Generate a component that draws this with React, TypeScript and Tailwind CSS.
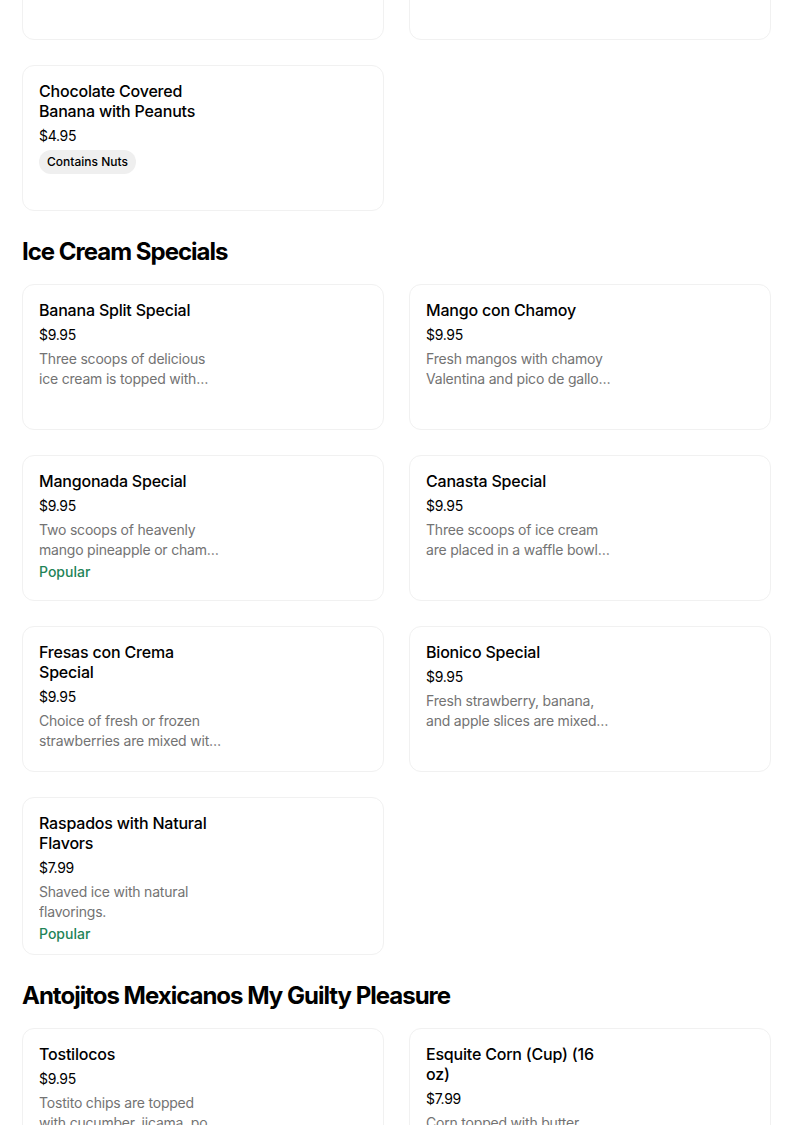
import React from "react";

interface MenuItem {
  name: string;
  price: string;
  description?: string;
  popular?: boolean;
  tag?: string;
}

interface Section {
  title?: string;
  items: (MenuItem | null)[];
}

const font = { fontFamily: "Inter, 'Liberation Sans', sans-serif" };

// the page is scrolled: the first row of cards sits mostly above the window
const sections: Section[] = [
  {
    items: [
      null,
      null,
      {
        name: "Chocolate Covered Banana with Peanuts",
        price: "$4.95",
        tag: "Contains Nuts",
      },
    ],
  },
  {
    title: "Ice Cream Specials",
    items: [
      {
        name: "Banana Split Special",
        price: "$9.95",
        description:
          "Three scoops of delicious ice cream is topped with bananas, whipped cream and a cherry.",
      },
      {
        name: "Mango con Chamoy",
        price: "$9.95",
        description:
          "Fresh mangos with chamoy Valentina and pico de gallo seasoning.",
      },
      {
        name: "Mangonada Special",
        price: "$9.95",
        description:
          "Two scoops of heavenly mango pineapple or chamoy sorbet with fresh mango.",
        popular: true,
      },
      {
        name: "Canasta Special",
        price: "$9.95",
        description:
          "Three scoops of ice cream are placed in a waffle bowl and topped with fruit.",
      },
      {
        name: "Fresas con Crema Special",
        price: "$9.95",
        description:
          "Choice of fresh or frozen strawberries are mixed with our sweet cream.",
      },
      {
        name: "Bionico Special",
        price: "$9.95",
        description:
          "Fresh strawberry, banana, and apple slices are mixed with sweet cream.",
      },
      {
        name: "Raspados with Natural Flavors",
        price: "$7.99",
        description: "Shaved ice with natural flavorings.",
        popular: true,
      },
    ],
  },
  {
    title: "Antojitos Mexicanos My Guilty Pleasure",
    items: [
      {
        name: "Tostilocos",
        price: "$9.95",
        description:
          "Tostito chips are topped with cucumber, jicama, pork rinds and peanuts.",
      },
      {
        name: "Esquite Corn (Cup) (16 oz)",
        price: "$7.99",
        description: "Corn topped with butter, mayo, cheese and chili.",
      },
    ],
  },
];

function ItemCard({ item }: { item: MenuItem | null }) {
  return (
    <div className="min-h-[146px] rounded-xl border border-[#f1f1f1] bg-white px-4 pb-[10px] pt-[15px]">
      {item ? (
        <div className="w-[185px]">
          <div className="text-[16px] font-medium leading-5 tracking-[-0.2px] text-black">
            {item.name}
          </div>
          <div className="mt-[5px] text-[14px] leading-5 tracking-[-0.3px] text-black">
            {item.price}
          </div>
          {item.description ? (
            <div className="mt-1 line-clamp-2 text-[14px] leading-5 tracking-[-0.2px] text-[#737373]">
              {item.description}
            </div>
          ) : null}
          {item.popular ? (
            <div className="mt-0.5 text-[14px] font-medium leading-5 text-[#1f8458]">
              Popular
            </div>
          ) : null}
          {item.tag ? (
            <div className="mt-1 inline-flex h-6 items-center rounded-full bg-[#efefef] px-2 text-[12px] font-medium text-black">
              {item.tag}
            </div>
          ) : null}
        </div>
      ) : null}
    </div>
  );
}

export default function App() {
  return (
    <div className="min-h-screen overflow-hidden bg-white" style={font}>
      <div className="-mt-[106px] ml-[22px] w-[749px]">
        {sections.map((section, i) => (
          <div key={i}>
            {section.title ? (
              <h2 className="mb-4 mt-[25px] text-[24px] font-bold leading-8 tracking-[-1px] text-black">
                {section.title}
              </h2>
            ) : null}
            <div className="grid grid-cols-2 gap-[25px]">
              {section.items.map((item, j) => (
                <ItemCard key={item ? item.name : `empty-${j}`} item={item} />
              ))}
            </div>
          </div>
        ))}
      </div>
    </div>
  );
}
